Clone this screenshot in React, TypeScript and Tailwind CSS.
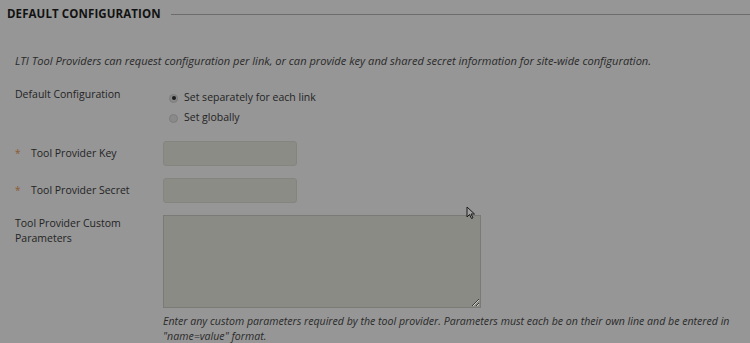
import { useState } from "react";

const font = { fontFamily: '"Open Sans", "Noto Sans", sans-serif' };

const Radio = ({ checked, label }: { checked: boolean; label: string }) => (
  <label className="flex items-center gap-[6px] h-[20px]">
    <span className="w-[9px] h-[9px] rounded-full bg-[#8a8a8a] border border-[#7c7c7c] flex items-center justify-center">
      {checked && <span className="w-[4px] h-[4px] rounded-full bg-[#1c1c1c]" />}
    </span>
    <span className="text-[10.5px] text-[#242424]">{label}</span>
  </label>
);

export default function App() {
  const [mode] = useState("separate");

  return (
    <div className="w-[750px] h-[343px] bg-[#969696] overflow-hidden relative" style={font}>
      <div className="flex items-center pl-[7px] pt-[5px] h-[23px]">
        <h2 className="text-[11.5px] font-bold text-[#121212] tracking-[0.1px] leading-none">
          DEFAULT CONFIGURATION
        </h2>
        <div className="flex-1 ml-[10px] h-[1px] bg-[#6c6c6c]" />
      </div>

      <p className="pl-[15px] mt-[31px] text-[11.1px] italic text-[#2a2a2a] leading-[14px]">
        LTI Tool Providers can request configuration per link, or can provide key and shared secret information for site-wide configuration.
      </p>

      <div className="mt-[18px] flex pl-[15px]">
        <div className="w-[148px] text-[10.5px] text-[#242424] leading-[14px] pt-[1px]">
          Default Configuration
        </div>
        <div className="flex flex-col pl-[6px] pt-[2px]">
          <Radio checked={mode === "separate"} label="Set separately for each link" />
          <Radio checked={mode === "global"} label="Set globally" />
        </div>
      </div>

      <div className="mt-[13px] flex items-center pl-[15px]">
        <div className="w-[148px] flex items-center text-[10.5px] text-[#242424]">
          <span className="w-[16px] text-[#8a5a30] text-[10px]">*</span>
          <span className="font-medium">Tool Provider Key</span>
        </div>
        <input className="w-[134px] h-[25px] rounded-[3px] bg-[#8c8c86] border border-[#858580] outline-none" />
      </div>

      <div className="mt-[12px] flex items-center pl-[15px]">
        <div className="w-[148px] flex items-center text-[10.5px] text-[#242424]">
          <span className="w-[16px] text-[#8a5a30] text-[10px]">*</span>
          <span className="font-medium">Tool Provider Secret</span>
        </div>
        <input className="w-[134px] h-[25px] rounded-[3px] bg-[#8c8c86] border border-[#858580] outline-none" />
      </div>

      <div className="mt-[12px] flex pl-[15px]">
        <div className="w-[148px] text-[10.5px] text-[#242424] font-medium leading-[15px] pt-[1px]">
          Tool Provider Custom
          <br />
          Parameters
        </div>
        <div className="flex flex-col">
          <textarea className="w-[318px] h-[93px] bg-[#8b8b85] border border-[#7a7a76] outline-none resize-y" />
          <p className="mt-[6px] text-[10.6px] italic text-[#2a2a2a] leading-[15px] w-[580px]">
            Enter any custom parameters required by the tool provider. Parameters must each be on their own line and be entered in "name=value" format.
          </p>
        </div>
      </div>

      <svg className="absolute left-[466px] top-[206px]" width="10" height="14" viewBox="0 0 10 14">
        <path d="M1 1 L1 11 L3.5 8.5 L5.5 12.5 L7 11.8 L5 8 L8.5 8 Z" fill="#a0a0a0" stroke="#1a1a1a" strokeWidth="1" />
      </svg>
    </div>
  );
}
